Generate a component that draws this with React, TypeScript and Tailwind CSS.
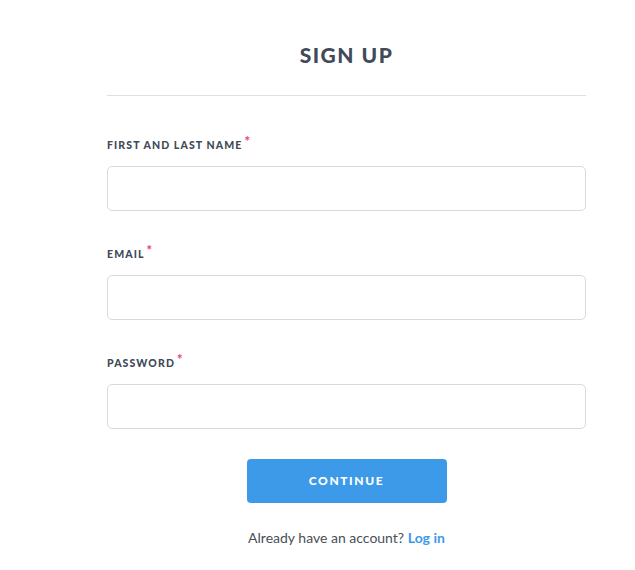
export default function App() {
  const fields = [
    { label: "First and last name", type: "text" },
    { label: "Email", type: "email" },
    { label: "Password", type: "password" },
  ];

  return (
    <div className="min-h-[570px] bg-white font-['Lato',sans-serif] text-[#414a58]">
      <div className="ml-[107px] w-[479px] pt-[40px]">
        <h1 className="text-center text-[21px] font-black uppercase leading-[30px] tracking-[1.5px]">
          Sign up
        </h1>
        <div className="mt-[25px] border-t border-[#dcdfe3]" />

        <form className="mt-[42px]">
          {fields.map((f) => (
            <div key={f.label} className="mb-[36px]">
              <label className="flex items-start text-[10.5px] font-black uppercase leading-[14px] tracking-[1.1px]">
                {f.label}
                <span className="ml-[2px] -mt-[4px] text-[13px] text-[#e5487e]">*</span>
              </label>
              <input
                type={f.type}
                className="mt-[14px] block h-[45px] w-full rounded-[5px] border border-[#d6dbe2] bg-white px-3 text-[14px] outline-none"
              />
            </div>
          ))}

          <div className="-mt-[6px] flex justify-center">
            <button
              type="button"
              className="h-[44px] w-[200px] rounded-[4px] bg-[#3d9ae9] text-[12px] font-black uppercase tracking-[1.6px] text-white"
            >
              Continue
            </button>
          </div>
        </form>

        <p className="mt-[24px] text-center text-[14px] text-[#4a4f57]">
          Already have an account?{" "}
          <a href="#" className="font-bold text-[#3d9ae9]">
            Log in
          </a>
        </p>
      </div>
    </div>
  );
}
